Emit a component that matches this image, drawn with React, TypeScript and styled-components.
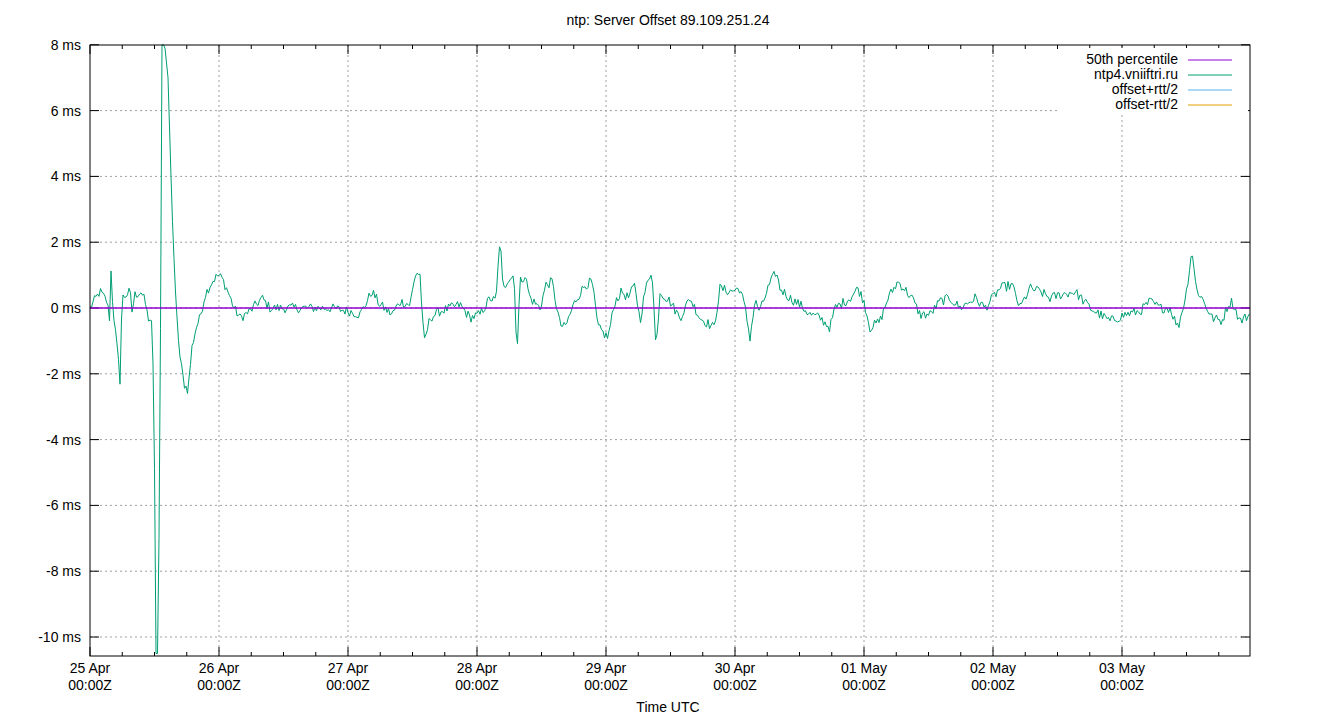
import React from "react";
import styled, { createGlobalStyle } from "styled-components";

const Global = createGlobalStyle`
  html, body { margin: 0; padding: 0; background: #fff; }
`;

const Frame = styled.div`
  width: 1340px;
  height: 720px;
  background: #fff;
  font-family: "Liberation Sans", Arial, sans-serif;
`;

const Chart = styled.svg`
  display: block;
  font-family: "Liberation Sans", Arial, sans-serif;
  font-size: 14px;
`;

const L = 90, R = 1250, T = 45, B = 656;
const Y0 = 308, PX = 32.9;
const yOf = (ms: number) => Y0 - ms * PX;

const keys: [number, number][] = [
  [90,0],[100,0.5],[107,0.2],[110,-0.4],[111,1.1],[113,0],[118,-1.5],[120,-2.2],[122,0.3],[130,0.5],[132,-0.1],[135,0.4],[141,0.5],[145,0.2],[148,-0.3],[152,-0.4],[154,-3],[156,-10.5],[158,-10.5],[160,-3.5],[162,8.0],[164,8.2],[168,7],[172,3],[176,0],[180,-1.5],[184,-2.3],[188,-2.5],[192,-1.2],[196,-0.6],[200,-0.3],[205,0.4],[212,0.8],[218,1.0],[222,0.9],[228,0.5],[234,0],[240,-0.3],[250,-0.1],[262,0.3],[270,0],[300,0],[330,0],[350,-0.1],[360,-0.2],[372,0.5],[380,0.1],[392,-0.2],[400,0.2],[410,0.1],[416,1.1],[420,1.0],[424,-1.1],[430,-0.3],[440,-0.1],[460,0.1],[470,-0.3],[480,-0.2],[490,0.3],[496,0.2],[500,2.2],[503,0.5],[508,0.9],[514,1.0],[517,-1.4],[520,0.8],[525,1.0],[530,0.3],[540,0],[546,0.7],[552,0.8],[560,-0.5],[565,-0.6],[575,0.2],[585,0.7],[592,0.8],[598,-0.6],[608,-0.9],[615,0.2],[622,0.5],[628,0.3],[635,0.7],[640,-0.4],[645,0.5],[652,1.2],[656,-1.3],[660,0.5],[670,0.2],[680,-0.3],[690,0.3],[700,-0.3],[714,-0.6],[720,0.6],[730,0.5],[740,0.6],[745,0],[750,-0.9],[755,0.2],[760,-0.1],[768,0.6],[776,1.1],[780,0.6],[790,0.3],[800,0.1],[810,-0.2],[820,-0.3],[830,-0.6],[835,0],[850,0.3],[858,0.6],[864,0.2],[870,-0.6],[880,-0.4],[888,0.3],[898,0.8],[904,0.6],[912,0.3],[920,-0.2],[930,-0.2],[940,0.2],[950,0.3],[960,0],[975,0.3],[985,0],[1000,0.6],[1012,0.7],[1020,0],[1030,0.6],[1040,0.5],[1050,0.3],[1060,0.4],[1075,0.5],[1090,0],[1100,-0.2],[1110,-0.4],[1125,-0.2],[1140,-0.1],[1150,0.2],[1160,0],[1170,0],[1178,-0.6],[1186,0.4],[1192,1.8],[1196,0.6],[1202,0.3],[1212,-0.3],[1222,-0.4],[1228,0.1],[1232,0.2],[1240,-0.4],[1250,-0.2],
];

function buildPath() {
  let seed = 12345;
  const rnd = () => { seed = (seed * 1103515245 + 12345) & 0x7fffffff; return seed / 0x7fffffff; };
  const pts: string[] = [];
  let k = 0;
  for (let x = L; x <= R; x += 1.5) {
    while (k < keys.length - 2 && keys[k + 1][0] <= x) k++;
    const [x0, y0] = keys[k], [x1, y1] = keys[k + 1];
    const t = Math.min(1, Math.max(0, (x - x0) / (x1 - x0)));
    let v = y0 + (y1 - y0) * t;
    const big = x > 150 && x < 175;
    if (!big) v += (rnd() - 0.5) * 0.3;
    v = Math.max(-10.55, Math.min(8.0, v));
    pts.push(`${x.toFixed(1)},${yOf(v).toFixed(1)}`);
  }
  return "M" + pts.join(" L");
}

const yTicks = [8, 6, 4, 2, 0, -2, -4, -6, -8, -10];
const days = ["25 Apr", "26 Apr", "27 Apr", "28 Apr", "29 Apr", "30 Apr", "01 May", "02 May", "03 May"];
const DX = 129;
const legend = [
  ["50th percentile", "#9400d3"],
  ["ntp4.vniiftri.ru", "#009e73"],
  ["offset+rtt/2", "#56b4e9"],
  ["offset-rtt/2", "#e69f00"],
];

export default function App() {
  const path = buildPath();
  const minor: number[] = [];
  for (let x = L; x <= R; x += DX / 4) minor.push(x);
  return (
    <Frame>
      <Global />
      <Chart width={1340} height={720} viewBox="0 0 1340 720">
        <text x={668} y={25} textAnchor="middle">ntp: Server Offset 89.109.251.24</text>
        {yTicks.map((v) => (
          <g key={v}>
            {v !== 8 && <line x1={L} x2={R} y1={yOf(v)} y2={yOf(v)} stroke="#a0a0a0" strokeDasharray="2,3" />}
            <line x1={L} x2={L + 9} y1={yOf(v)} y2={yOf(v)} stroke="#000" />
            <line x1={R - 9} x2={R} y1={yOf(v)} y2={yOf(v)} stroke="#000" />
            <text x={81} y={yOf(v) + 5} textAnchor="end">{v} ms</text>
          </g>
        ))}
        {minor.map((x, i) => (
          <g key={i}>
            {i % 4 === 0 && i > 0 && <line x1={x} x2={x} y1={T} y2={B} stroke="#a0a0a0" strokeDasharray="2,3" />}
            <line x1={x} x2={x} y1={B} y2={B - (i % 4 === 0 ? 9 : 4)} stroke="#000" />
            <line x1={x} x2={x} y1={T} y2={T + (i % 4 === 0 ? 9 : 4)} stroke="#000" />
          </g>
        ))}
        {days.map((d, i) => (
          <g key={d}>
            <text x={L + i * DX} y={673} textAnchor="middle">{d}</text>
            <text x={L + i * DX} y={690} textAnchor="middle">00:00Z</text>
          </g>
        ))}
        <text x={668} y={712} textAnchor="middle">Time UTC</text>
        <rect x={1060} y={48} width={188} height={64} fill="#fff" />
        <path d={path} fill="none" stroke="#009e73" strokeWidth={1} />
        <line x1={L} x2={R} y1={Y0} y2={Y0} stroke="#9400d3" strokeWidth={1.5} />
        {legend.map(([t, c], i) => (
          <g key={t}>
            <text x={1178} y={64 + i * 15} textAnchor="end">{t}</text>
            <line x1={1188} x2={1232} y1={60 + i * 15} y2={60 + i * 15} stroke={c} />
          </g>
        ))}
        <rect x={L} y={T} width={R - L} height={B - T} fill="none" stroke="#000" />
      </Chart>
    </Frame>
  );
}
